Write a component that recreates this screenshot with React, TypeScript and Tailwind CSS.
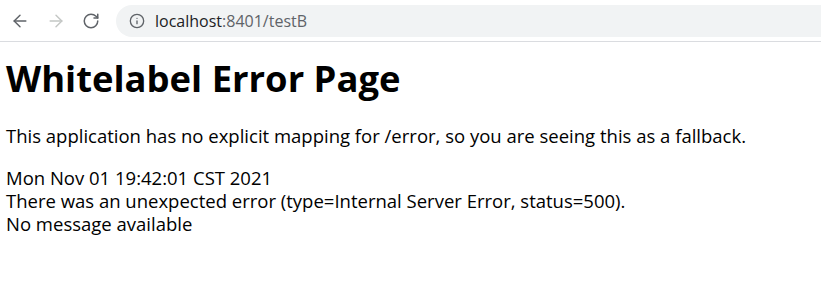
import { ArrowLeft, ArrowRight, RotateCw, Info } from 'lucide-react';

const Toolbar = () => (
  <div className="flex h-[42px] items-center border-b border-[#dadce0] bg-white pl-[10px]">
    <div className="flex items-center gap-[16px] text-[#5f6368]">
      <ArrowLeft className="h-[20px] w-[20px]" strokeWidth={1.75} />
      <ArrowRight className="h-[20px] w-[20px] text-[#c4c7c5]" strokeWidth={1.75} />
      <RotateCw className="h-[18px] w-[18px]" strokeWidth={2} />
    </div>
    <div className="ml-[16px] flex h-[32px] flex-1 items-center rounded-l-full bg-[#f1f3f4] pl-[13px]">
      <Info className="h-[16px] w-[16px] text-[#5f6368]" strokeWidth={2} />
      <span className="ml-[10px] text-[16px] text-[#202124]">
        localhost<span className="text-[#5f6368]">:8401/testB</span>
      </span>
    </div>
  </div>
);

export default function App() {
  return (
    <div className="h-[294px] w-[821px] overflow-hidden bg-white font-['Open_Sans',sans-serif] text-black">
      <Toolbar />
      <div className="px-[6px]">
        <h1 className="mt-[14px] text-[36.4px] font-bold leading-[44px]">Whitelabel Error Page</h1>
        <p className="mt-[24px] text-[18.5px] leading-[24px]">
          This application has no explicit mapping for /error, so you are seeing this as a fallback.
        </p>
        <div className="mt-[18px] text-[18.5px] leading-[23px]">
          <div>Mon Nov 01 19:42:01 CST 2021</div>
          <div>There was an unexpected error (type=Internal Server Error, status=500).</div>
          <div>No message available</div>
        </div>
      </div>
    </div>
  );
}
